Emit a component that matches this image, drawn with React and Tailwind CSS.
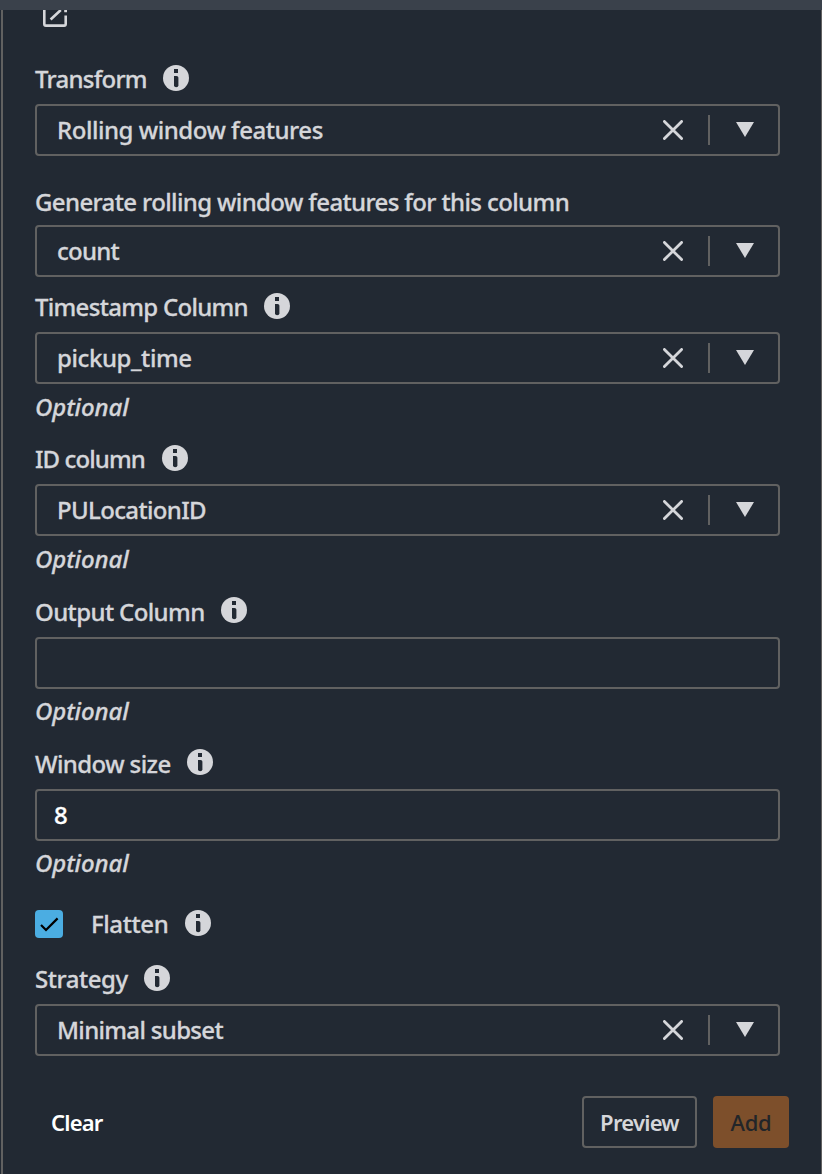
import React from 'react';

function InfoIcon() {
  return (
    <svg className="h-[26px] w-[26px] shrink-0" viewBox="0 0 26 26">
      <circle cx="13" cy="13" r="13" fill="#d5d6da" />
      <rect x="11" y="4" width="4" height="4" fill="#222933" />
      <path d="M11 11h2.5Q15.4 11 15.4 12.8V20.3Q15.4 22.3 13.2 22.3T11 20.3Z" fill="#222933" />
    </svg>
  );
}

function Label({ text, width, tracking = '', gap = 'mb-2', pad = 'pt-0.5' }) {
  return (
    <div className={`flex h-9 items-center gap-4 ${gap}`}>
      <span className={`whitespace-nowrap ${pad} ${width} ${tracking}`}>{text}</span>
      <InfoIcon />
    </div>
  );
}

function Select({ value, tracking = '' }) {
  return (
    <div className="flex h-[52px] items-center rounded-[4px] border-2 border-[#616161] pl-5">
      <span className={`flex-1 whitespace-nowrap ${tracking}`}>{value}</span>
      <svg className="h-5 w-5" viewBox="0 0 20 20" fill="none" stroke="#d5d6da" strokeWidth="2.8" strokeLinecap="round">
        <path d="M1.4 1.4 18.6 18.6M18.6 1.4 1.4 18.6" />
      </svg>
      <div className="ml-[25px] h-[30px] w-0.5 bg-[#616161]" />
      <svg className="mr-[24px] ml-[26px] h-[15px] w-[18px] -translate-y-px" viewBox="0 0 18 15">
        <path d="M0 0h18L9 15Z" fill="#d5d6da" />
      </svg>
    </div>
  );
}

function Optional({ className = 'mt-[5px] mb-px' }) {
  return <div className={`h-9 leading-9 tracking-[-0.1px] italic ${className}`}>Optional</div>;
}

export default function App() {
  return (
    <div className="flex h-[1174px] w-[822px] flex-col overflow-hidden bg-[#222933] font-['Noto_Sans',sans-serif] text-[24px] leading-9 font-medium text-[#d5d6da] [-webkit-text-stroke:0.3px]">
      <div className="h-2.5 shrink-0 bg-[#3a414b]" />
      <div className="ml-px flex flex-1 flex-col border-r border-l-2 border-[#616161] pr-[41px] pl-8">
        <div className="h-[50px] pl-2">
          <svg className="h-[17px] w-[26px]" viewBox="0 0 26 17" fill="none" stroke="#d5d6da" strokeWidth="2.6">
            <path d="M1.3 0V14Q1.3 15.6 2.9 15.6H21.1Q22.7 15.6 22.7 14V5.5M7.6 9.5 17.8 0M21.2 1h2.8" />
          </svg>
        </div>
        <Label text="Transform" width="w-[112px]" tracking="tracking-[-0.75px]" />
        <Select value="Rolling window features" tracking="tracking-[-0.46px]" />
        <div className="mt-[28px] mb-[5px] h-9 tracking-[-0.62px] whitespace-nowrap">Generate rolling window features for this column</div>
        <Select value="count" tracking="tracking-[-0.75px]" />
        <div className="h-[11px]" />
        <Label text="Timestamp Column" width="w-[213px]" tracking="tracking-[-0.7px]" />
        <Select value="pickup_time" tracking="tracking-[-0.4px]" />
        <Optional />
        <div className="h-[14px]" />
        <Label text="ID column" width="w-[111px]" tracking="tracking-[-0.9px]" />
        <Select value="PULocationID" tracking="tracking-[-0.65px]" />
        <Optional />
        <div className="h-[14px]" />
        <Label text="Output Column" width="w-[170px]" tracking="tracking-[-0.62px]" gap="mb-[9px]" pad="pt-1" />
        <div className="h-[52px] shrink-0 rounded-[4px] border-2 border-[#616161]" />
        <Optional className="mt-1 mb-0.5" />
        <div className="h-[13px]" />
        <Label text="Window size" width="w-[136px]" tracking="tracking-[-0.6px]" gap="mb-[9px]" pad="pt-1" />
        <div className="flex h-[52px] items-center rounded-[4px] border-2 border-[#616161] pl-[17px] text-white">8</div>
        <Optional className="mt-1 mb-0.5" />
        <div className="mt-[23px] flex h-9 items-center">
          <div className="flex h-7 w-7 items-center justify-center rounded-[4px] bg-[#4bade2]">
            <svg className="h-[15px] w-[19px]" viewBox="0 0 19 15" fill="none" stroke="#000" strokeWidth="2.2">
              <path d="M1 8 6 13 17.6 1.4" />
            </svg>
          </div>
          <span className="ml-7 w-[94px] tracking-[-0.4px] whitespace-nowrap">Flatten</span>
          <div className="-mt-0.5">
            <InfoIcon />
          </div>
        </div>
        <div className="mt-[18px]" />
        <Label text="Strategy" width="w-[93px]" tracking="tracking-[-0.45px]" />
        <Select value="Minimal subset" tracking="tracking-[-0.68px]" />
        <div className="mt-10 -mr-[9px] flex h-[52px] items-center text-[22px] [-webkit-text-stroke:0px]">
          <span className="flex-1 pl-4 font-semibold tracking-[-0.8px] text-white">Clear</span>
          <div className="mr-4 flex h-[52px] w-[115px] items-center justify-center rounded-[4px] border-2 border-[#616161] font-semibold tracking-[-0.75px]">Preview</div>
          <div className="flex h-[52px] w-[76px] items-center justify-center rounded-[4px] bg-[#7d4f2b] tracking-[-0.2px] text-[#222529]">Add</div>
        </div>
      </div>
    </div>
  );
}
